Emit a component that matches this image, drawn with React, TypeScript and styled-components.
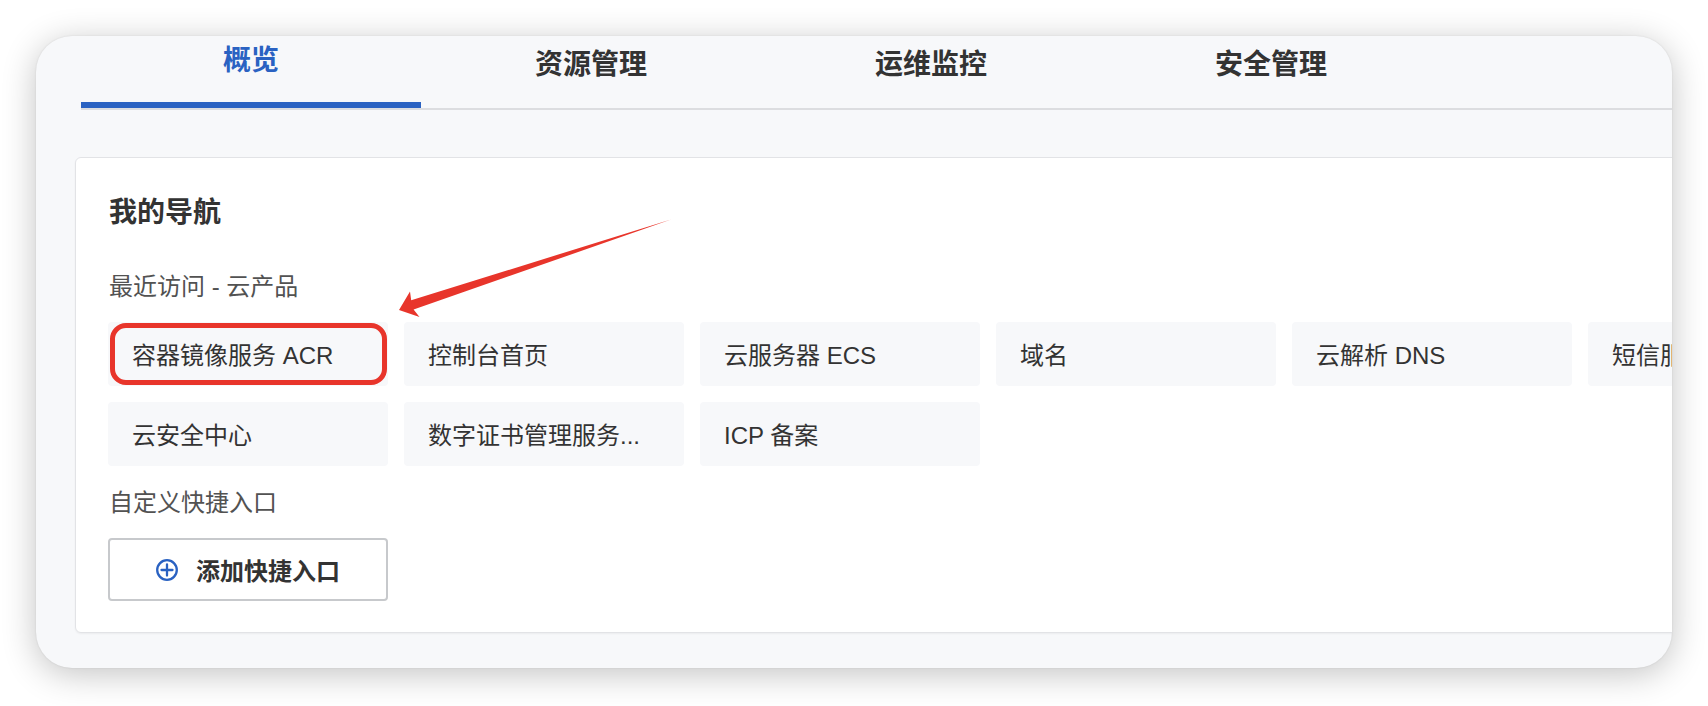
import React from "react";
import styled, { createGlobalStyle, css } from "styled-components";

const GlobalStyle = createGlobalStyle`
  html, body { margin: 0; padding: 0; background: #ffffff; }
  body {
    font-family: "Liberation Sans", "Noto Sans CJK SC", sans-serif;
    -webkit-font-smoothing: antialiased;
  }
  * { box-sizing: border-box; }
`;

const Stage = styled.div`
  position: relative;
  width: 1708px;
  height: 706px;
  padding: 36px 0 0 36px;
  overflow: hidden;
  background: #ffffff;
`;

const Window = styled.div`
  width: 1636px;
  height: 632px;
  background: #f7f8fa;
  border-radius: 36px;
  box-shadow: 0 6px 34px rgba(0, 0, 0, 0.24), 0 0 2px rgba(0, 0, 0, 0.1);
  overflow: hidden;
  display: flex;
  flex-direction: column;
`;

const TabBar = styled.nav`
  display: flex;
  margin-left: 45px;
  border-bottom: 2px solid #dcdde0;
  flex-shrink: 0;
`;

const Tab = styled.div<{ $active?: boolean }>`
  width: 340px;
  height: 72px;
  padding-top: ${(p) => (p.$active ? 5 : 9)}px;
  border-bottom: 6px solid ${(p) => (p.$active ? "#2a62c2" : "transparent")};
  text-align: center;
  font-size: 28px;
  line-height: 40px;
  font-weight: 700;
  color: ${(p) => (p.$active ? "#2a62c2" : "#333333")};
`;

const Card = styled.section`
  margin: 47px 0 0 39px;
  width: 1840px;
  flex-shrink: 0;
  background: #ffffff;
  border: 1px solid #e2e3e6;
  border-radius: 6px;
  box-shadow: 0 1px 2px rgba(0, 0, 0, 0.05);
  padding: 35px 32px 31px 32px;
  display: flex;
  flex-direction: column;
  align-items: flex-start;
`;

const Title = styled.h2`
  margin: 0;
  padding-left: 1px;
  font-size: 28px;
  line-height: 40px;
  font-weight: 700;
  color: #333333;
`;

const SubTitle = styled.div<{ $gap: number }>`
  margin-top: ${(p) => p.$gap}px;
  padding-left: 1px;
  font-size: 24px;
  line-height: 34px;
  color: #525252;
`;

const TileGrid = styled.div`
  margin-top: 18px;
  display: grid;
  grid-template-columns: repeat(6, 280px);
  gap: 16px;
`;

const Tile = styled.div<{ $highlighted?: boolean }>`
  position: relative;
  height: 64px;
  padding: 0 24px 2px;
  display: flex;
  align-items: center;
  background: #f7f8fa;
  border-radius: 4px;
  font-size: 24px;
  color: #333333;
  white-space: nowrap;
  overflow: hidden;
  ${(p) =>
    p.$highlighted &&
    css`
      &::after {
        content: "";
        position: absolute;
        inset: 1px 1px 1px 2px;
        border: 5px solid #e8352b;
        border-radius: 16px;
      }
    `}
`;

const AddButton = styled.button`
  margin-top: 18px;
  width: 280px;
  height: 63px;
  padding: 0;
  display: flex;
  align-items: center;
  justify-content: center;
  gap: 18px;
  background: #ffffff;
  border: 2px solid #c7c9cc;
  border-radius: 4px;
  font-family: inherit;
  font-size: 24px;
  font-weight: 700;
  color: #333333;
`;

const Overlay = styled.svg`
  position: absolute;
  left: 0;
  top: 0;
  pointer-events: none;
`;

const PlusCircle = () => (
  <svg width="22" height="22" viewBox="0 0 22 22" fill="none">
    <circle cx="11" cy="11" r="9.8" stroke="#2a62c2" strokeWidth="2.3" />
    <path d="M11 5.5v11M5.5 11h11" stroke="#2a62c2" strokeWidth="2.3" strokeLinecap="round" />
  </svg>
);

const tabs = ["概览", "资源管理", "运维监控", "安全管理"];
const recent = [
  "容器镜像服务 ACR",
  "控制台首页",
  "云服务器 ECS",
  "域名",
  "云解析 DNS",
  "短信服务",
  "云安全中心",
  "数字证书管理服务...",
  "ICP 备案",
];

export default function App() {
  return (
    <>
      <GlobalStyle />
      <Stage>
        <Window>
          <TabBar>
            {tabs.map((t, i) => (
              <Tab key={t} $active={i === 0}>
                {t}
              </Tab>
            ))}
          </TabBar>
          <Card>
            <Title>我的导航</Title>
            <SubTitle $gap={37}>最近访问 - 云产品</SubTitle>
            <TileGrid>
              {recent.map((r, i) => (
                <Tile key={r} $highlighted={i === 0}>
                  {r}
                </Tile>
              ))}
            </TileGrid>
            <SubTitle $gap={20}>自定义快捷入口</SubTitle>
            <AddButton>
              <PlusCircle />
              添加快捷入口
            </AddButton>
          </Card>
        </Window>
        <Overlay width="1708" height="706" viewBox="0 0 1708 706">
          <polygon
            points="399,310 410,291.5 411.2,300.2 671,219.5 413.6,309.6 419.5,317"
            fill="#e8352b"
          />
        </Overlay>
      </Stage>
    </>
  );
}
